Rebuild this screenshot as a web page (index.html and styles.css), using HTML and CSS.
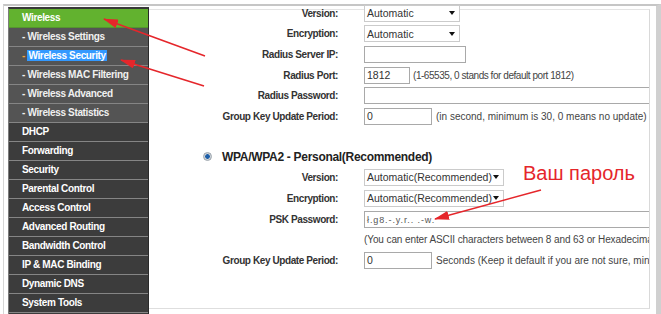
FILE: index.html
```html
<!DOCTYPE html>
<html>
<head>
    <meta charset="UTF-8">
    <link rel="stylesheet" href="styles.css">
</head>
<body>
<div class="page">
    <ul class="menu">
        <li class="item open">Wireless</li>
        <li class="item sub">- Wireless Settings</li>
        <li class="item sub"><span class="dash">-</span> <span class="picked">Wireless Security</span></li>
        <li class="item sub">- Wireless MAC Filtering</li>
        <li class="item sub">- Wireless Advanced</li>
        <li class="item sub">- Wireless Statistics</li>
        <li class="item">DHCP</li>
        <li class="item">Forwarding</li>
        <li class="item">Security</li>
        <li class="item">Parental Control</li>
        <li class="item">Access Control</li>
        <li class="item">Advanced Routing</li>
        <li class="item">Bandwidth Control</li>
        <li class="item">IP &amp; MAC Binding</li>
        <li class="item">Dynamic DNS</li>
        <li class="item">System Tools</li>
    </ul>
    <div class="main">
        <div class="form">
            <div class="row"><span class="label">Version:</span><span class="field"><span class="select w96">Automatic</span></span></div>
            <div class="row"><span class="label">Encryption:</span><span class="field"><span class="select w96">Automatic</span></span></div>
            <div class="row"><span class="label">Radius Server IP:</span><span class="field"><span class="input w102"></span></span></div>
            <div class="row"><span class="label">Radius Port:</span><span class="field"><span class="input w46">1812</span><span class="note tight">(1-65535, 0 stands for default port 1812)</span></span></div>
            <div class="row"><span class="label">Radius Password:</span><span class="field"><span class="input wide"></span></span></div>
            <div class="row"><span class="label">Group Key Update Period:</span><span class="field"><span class="input w68">0</span><span class="note">(in second, minimum is 30, 0 means no update)</span></span></div>
        </div>
        <div class="gap"></div>
        <div class="form sec2">
            <div class="row heading"><span class="radio"></span>WPA/WPA2 - Personal(Recommended)</div>
            <div class="row"><span class="label">Version:</span><span class="field"><span class="select w140">Automatic(Recommended)</span></span></div>
            <div class="row"><span class="label">Encryption:</span><span class="field"><span class="select w140">Automatic(Recommended)</span></span></div>
            <div class="row"><span class="label">PSK Password:</span><span class="field"><span class="input wide"><span class="garbled">ł.g8.-.y.r.. .-w.</span></span></span></div>
            <div class="row"><span class="label"></span><span class="field"><span class="note flush">(You can enter ASCII characters between 8 and 63 or Hexadecimal characters between 8 and 64.)</span></span></div>
            <div class="row"><span class="label">Group Key Update Period:</span><span class="field"><span class="input w68">0</span><span class="note">Seconds (Keep it default if you are not sure, minimum is 30, 0 means no update)</span></span></div>
        </div>
    </div>
</div>
<svg class="arrows" width="661" height="314" viewBox="0 0 661 314">
    <defs>
        <marker id="head" markerWidth="15" markerHeight="9" refX="14" refY="4.5" orient="auto" markerUnits="userSpaceOnUse">
            <path d="M0 0 L15 4.5 L0 9 Z" fill="#e5262b"/>
        </marker>
    </defs>
    <line x1="205" y1="56" x2="104" y2="19" class="arrow" marker-end="url(#head)"/>
    <line x1="204" y1="86" x2="121" y2="60" class="arrow" marker-end="url(#head)"/>
    <line x1="541" y1="190" x2="435" y2="219" class="arrow" marker-end="url(#head)"/>
</svg>
<div class="callout">Ваш пароль</div>
</body>
</html>
```

FILE: styles.css
```css
*{box-sizing: border-box;}
body{margin: 0;width: 661px;height: 314px;overflow: hidden;position: relative;background: #fff;color: #333;font-family: "Liberation Sans", Arial, sans-serif;}

.page{
    display: flex;
    height: 310px;
    margin: 4px 0 0 3px;
    border-top: 2px solid #c6c6c6;border-left: 1px solid #d6d6d6;border-right: 5px solid #d0d0d0;
}

/* left menu */
.menu{
    list-style: none;flex: none;
    width: 141px;margin: 1px 0 0 4px;padding: 0;
    background: #3c3c3c;
    border-top: 2px solid #383838;border-left: 1px solid #7c7c7c;border-right: 1px solid #2a2a2a;
}
.item{
    height: 19px;line-height: 18px;padding-left: 13px;
    border-bottom: 1px solid #858585;
    font-size: 10px;font-weight: bold;letter-spacing: -0.35px;color: #fff;white-space: nowrap;
}
.item.open{background: #62b22f;border-bottom-color: #55952e;}
.item.sub{background: #545454;color: #f0f0f0;}
.dash{color: #f0a43c;}
.picked{background: #3399ff;color: #fff;padding: 0 1px;}

/* form panel */
.main{
    flex: 1;min-width: 0;
    height: 300px;margin: 3px 6px 0 0;
    border-top: 1px solid #e4e4e4;border-right: 1px solid #d9d9d9;border-bottom: 1px solid #dedede;
}
.form{margin-top: -7.35px;}
.form.sec2{margin-top: 0;}
.gap{height: 19.5px;}
.row{display: flex;align-items: center;height: 20.7px;overflow: hidden;white-space: nowrap;}
.sec2 .row{height: 20.8px;}
.label{flex: none;width: 189px;text-align: right;font-size: 10px;font-weight: bold;letter-spacing: -0.4px;color: #333;}
.field{display: flex;align-items: center;flex: 1;min-width: 0;margin-left: 26px;}

.select{
    display: flex;align-items: center;justify-content: space-between;flex: none;
    height: 17px;padding: 0 4px 0 2px;
    border: 1px solid #cbcbcb;background: #fff;
    font-size: 10.5px;color: #333;
}
.select::after{content: "";border-left: 3px solid transparent;border-right: 3px solid transparent;border-top: 4px solid #111;}
.input{
    display: block;flex: none;
    height: 17px;line-height: 15px;padding-left: 2px;
    border: 1px solid #a9a9a9;background: #fff;
    font-size: 10.5px;color: #333;
}
.input.wide{flex: 1;border-right: 0;}
.w46{width: 46px;}.w68{width: 68px;}.w96{width: 96px;}.w102{width: 102px;}.w140{width: 140px;}
.note{margin-left: 4px;font-size: 10px;color: #444;}
.note.tight{margin-left: 3px;letter-spacing: -0.45px;}
.note.flush{margin-left: 0;letter-spacing: -0.1px;}
.garbled{font-size: 9px;letter-spacing: 0.9px;color: #555;}

.heading{padding-left: 54px;font-size: 12px;font-weight: bold;letter-spacing: -0.3px;color: #222;}
.radio{
    width: 9px;height: 9px;margin-right: 10px;border-radius: 50%;
    border: 1px solid #9aa3ab;
    background: radial-gradient(circle, #1d5ea8 0 2px, #cdd3d9 2.6px);
}

/* annotations over the screenshot */
.arrows{position: absolute;top: 0;left: 0;pointer-events: none;}
.arrow{stroke: #e5262b;stroke-width: 1.6;}
.callout{position: absolute;left: 523px;top: 163px;line-height: 1;font-size: 20px;color: #e5262b;white-space: nowrap;}
```
